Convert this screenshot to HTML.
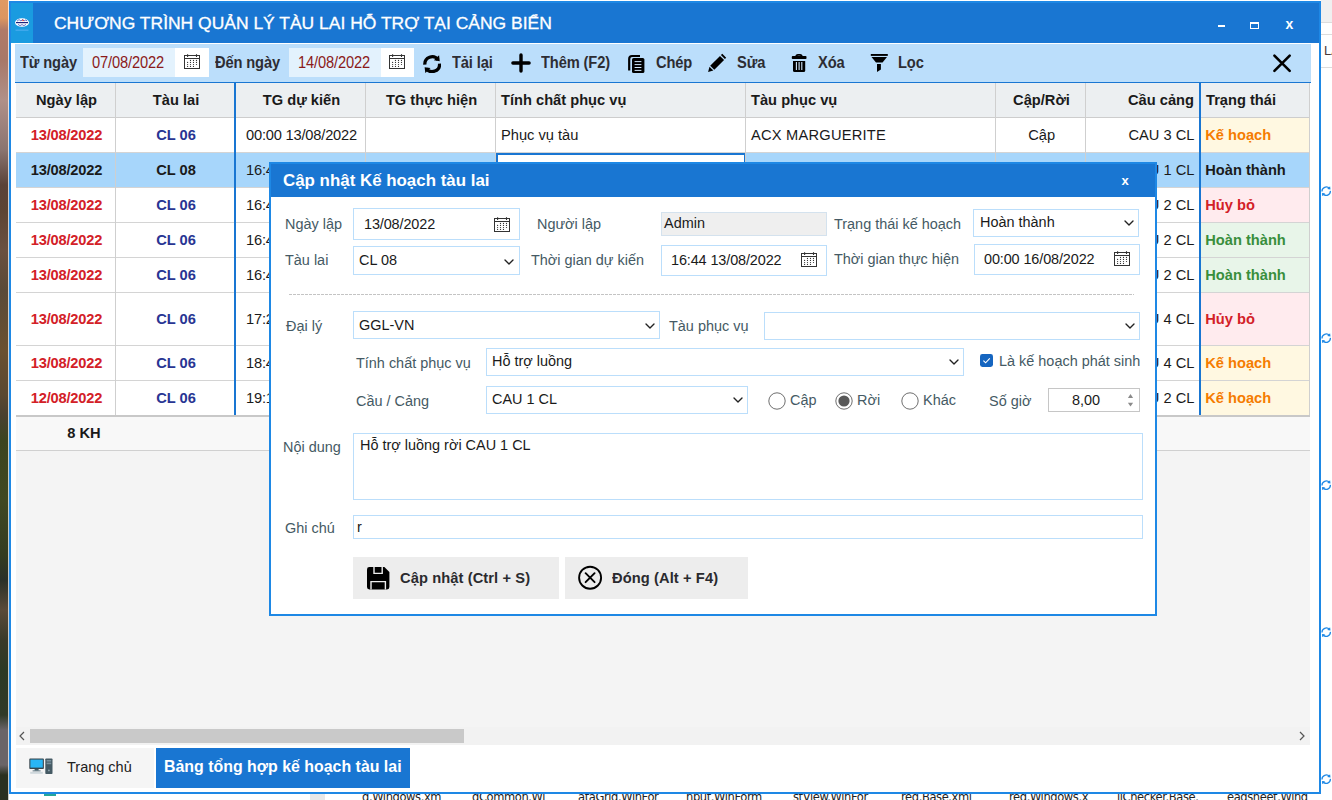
<!DOCTYPE html>
<html lang="vi">
<head>
<meta charset="utf-8">
<title>Chương trình quản lý tàu lai hỗ trợ tại cảng biển</title>
<style>
*{box-sizing:border-box;margin:0;padding:0}
html,body{width:1332px;height:800px;overflow:hidden;background:#fff}
body{position:relative;font-family:"Liberation Sans",Arial,sans-serif;font-size:14.67px;color:#212121}
.abs{position:absolute}
.t{position:absolute;white-space:nowrap;line-height:20px;height:20px}
.b{font-weight:bold}
#bgL{left:0;top:0;width:8px;height:800px;background:linear-gradient(180deg,#e09a62 0,#dc9660 18px,#b07a68 30px,#a87868 60px,#b09088 100px,#8a7470 150px,#5a4238 185px,#5c4434 210px,#6a5040 250px,#5a4a38 290px,#6a5030 350px,#5a4830 395px,#4a4030 415px,#3c4420 440px,#404822 500px,#343c20 555px,#2a3028 580px,#5a4a38 610px,#3a3a28 640px,#2c3a24 670px,#303a28 715px,#6a6468 730px,#6a6468 765px,#2a3020 775px,#2a3020 800px);border-right:1.5px solid rgba(255,255,255,.75);width:9px}
#win{left:9px;top:1px;width:1312px;height:793px;background:#fff;border:2px solid #1e88e5}
#tbar{left:11px;top:2.5px;width:1308px;height:40.5px;background:#1976d2}
#ticon{left:11px;top:2.5px;width:22px;height:40.5px;background:#1a9be0}
#title{-webkit-text-stroke:0.3px #fff;left:54px;top:12.6px;font-size:16.2px;color:#fff;line-height:20px;transform:scaleX(1.079);transform-origin:0 0}
#tool{left:15px;top:44px;width:1296px;height:38px;background:#bbdefb}
.tl{font-weight:bold;color:#2d2d33;top:53px;transform:scaleY(1.08);transform-origin:0 74%;letter-spacing:-0.12px}
.dinp{top:48px;height:29px;background:#e3f2fd}
.dbtn{top:48px;height:29px;background:#fff}
.dtxt{color:#8b1a1a;top:53px;transform:scaleY(1.08);transform-origin:0 74%}
#gridtop{left:15px;top:82px;width:1296px;height:1.4px;background:#1976d2}
#ghead{left:16px;top:83px;width:1294px;height:35px;background:#eceff1;border-bottom:1px solid #cdcdcd}
.row{left:16px;width:1294px;background:#fff;border-bottom:1px solid #d4d4d4}
.sel{background:#a7d6fb}
.vl{width:1px;background:#cfcfcf;top:83px;height:333px}
.bl{width:2px;background:#1976d2;top:83px;height:333px}
#gfoot{left:16px;top:415px;width:1294px;height:36px;background:#f8f8f8;border-top:2px solid #c8c8c8;border-bottom:1px solid #d0d0d0}
#gbody{left:16px;top:451px;width:1294px;height:276px;background:#f4f4f4}
#hscroll{left:16px;top:727px;width:1294px;height:18px;background:#f2f2f2}
#hthumb{left:30px;top:729px;width:434px;height:14px;background:#c9c9c9}
.red{color:#d32027}.blue{color:#283593}.org{color:#f57c00}.grn{color:#388e3c}
#tab1{left:16px;top:748px;width:138px;height:40px;background:#f5f5f5}
#tab2{left:156px;top:748px;width:254px;height:40px;background:#1976d2}
#dlg{left:269px;top:162px;width:888px;height:454px;background:#fff;border:2px solid #1e88e5}
#dlgt{left:271px;top:164px;width:884px;height:33px;background:#1976d2}
.lb{color:#455a64;font-size:14.45px}
.inp{background:#fff;border:1px solid #bbdefb}
.dk{color:#1a1a1a}
.dv{font-size:14.45px}
.btn{background:#ededed;top:557px;height:42px}
</style>
</head>
<body>
<div class="abs" id="bgL"></div>
<div class="abs" style="left:1321px;top:0;width:11px;height:23px;background:#f0f0f0;border-bottom:1px solid #dcdcdc"></div>
<div class="abs" style="left:1321px;top:34px;width:11px;height:1px;background:#dcdcdc"></div>
<div class="abs" style="left:1321px;top:67px;width:11px;height:1px;background:#dcdcdc"></div>
<div class="t " style="left:1324px;top:41px;font-size:13px;color:#4a3a3a">LA</div>
<svg class="abs" style="left:1320.5px;top:185.8px" width="10.4" height="10.4" viewBox="0 0 18 18"><path d="M1.8 9.5 A7.2 7.2 0 0 1 14.67 4.57" fill="none" stroke="#1e88e5" stroke-width="2.2"/><path d="M16.2 8.5 A7.2 7.2 0 0 1 3.33 13.43" fill="none" stroke="#1e88e5" stroke-width="2.2"/><polygon points="15.75,0.3 16.4,6.05 10.65,5.2" fill="#1e88e5"/><polygon points="2.25,17.7 1.6,11.95 7.35,12.8" fill="#1e88e5"/></svg>
<svg class="abs" style="left:1320.5px;top:332.5px" width="10.4" height="10.4" viewBox="0 0 18 18"><path d="M1.8 9.5 A7.2 7.2 0 0 1 14.67 4.57" fill="none" stroke="#1e88e5" stroke-width="2.2"/><path d="M16.2 8.5 A7.2 7.2 0 0 1 3.33 13.43" fill="none" stroke="#1e88e5" stroke-width="2.2"/><polygon points="15.75,0.3 16.4,6.05 10.65,5.2" fill="#1e88e5"/><polygon points="2.25,17.7 1.6,11.95 7.35,12.8" fill="#1e88e5"/></svg>
<svg class="abs" style="left:1320.5px;top:479.7px" width="10.4" height="10.4" viewBox="0 0 18 18"><path d="M1.8 9.5 A7.2 7.2 0 0 1 14.67 4.57" fill="none" stroke="#1e88e5" stroke-width="2.2"/><path d="M16.2 8.5 A7.2 7.2 0 0 1 3.33 13.43" fill="none" stroke="#1e88e5" stroke-width="2.2"/><polygon points="15.75,0.3 16.4,6.05 10.65,5.2" fill="#1e88e5"/><polygon points="2.25,17.7 1.6,11.95 7.35,12.8" fill="#1e88e5"/></svg>
<svg class="abs" style="left:1320.5px;top:626.6999999999999px" width="10.4" height="10.4" viewBox="0 0 18 18"><path d="M1.8 9.5 A7.2 7.2 0 0 1 14.67 4.57" fill="none" stroke="#1e88e5" stroke-width="2.2"/><path d="M16.2 8.5 A7.2 7.2 0 0 1 3.33 13.43" fill="none" stroke="#1e88e5" stroke-width="2.2"/><polygon points="15.75,0.3 16.4,6.05 10.65,5.2" fill="#1e88e5"/><polygon points="2.25,17.7 1.6,11.95 7.35,12.8" fill="#1e88e5"/></svg>
<svg class="abs" style="left:1320.5px;top:773.6999999999999px" width="10.4" height="10.4" viewBox="0 0 18 18"><path d="M1.8 9.5 A7.2 7.2 0 0 1 14.67 4.57" fill="none" stroke="#1e88e5" stroke-width="2.2"/><path d="M16.2 8.5 A7.2 7.2 0 0 1 3.33 13.43" fill="none" stroke="#1e88e5" stroke-width="2.2"/><polygon points="15.75,0.3 16.4,6.05 10.65,5.2" fill="#1e88e5"/><polygon points="2.25,17.7 1.6,11.95 7.35,12.8" fill="#1e88e5"/></svg>
<div class="t" style="left:362px;top:787px;font-size:11.5px;color:#222;font-family:'DejaVu Sans','Liberation Sans',sans-serif;letter-spacing:-0.4px">d.Windows.xm</div>
<div class="t" style="left:472px;top:787px;font-size:11.5px;color:#222;font-family:'DejaVu Sans','Liberation Sans',sans-serif;letter-spacing:-0.4px">dCommon.Wi</div>
<div class="t" style="left:578px;top:787px;font-size:11.5px;color:#222;font-family:'DejaVu Sans','Liberation Sans',sans-serif;letter-spacing:-0.4px">ataGrid.WinFor</div>
<div class="t" style="left:686px;top:787px;font-size:11.5px;color:#222;font-family:'DejaVu Sans','Liberation Sans',sans-serif;letter-spacing:-0.4px">nput.WinForm</div>
<div class="t" style="left:793px;top:787px;font-size:11.5px;color:#222;font-family:'DejaVu Sans','Liberation Sans',sans-serif;letter-spacing:-0.4px">stView.WinFor</div>
<div class="t" style="left:901px;top:787px;font-size:11.5px;color:#222;font-family:'DejaVu Sans','Liberation Sans',sans-serif;letter-spacing:-0.4px">red.Base.xml</div>
<div class="t" style="left:1009px;top:787px;font-size:11.5px;color:#222;font-family:'DejaVu Sans','Liberation Sans',sans-serif;letter-spacing:-0.4px">red.Windows.x</div>
<div class="t" style="left:1117px;top:787px;font-size:11.5px;color:#222;font-family:'DejaVu Sans','Liberation Sans',sans-serif;letter-spacing:-0.4px">llChecker.Base.</div>
<div class="t" style="left:1227px;top:787px;font-size:11.5px;color:#222;font-family:'DejaVu Sans','Liberation Sans',sans-serif;letter-spacing:-0.4px">eadsheet.Wind</div>
<div class="abs" style="left:310px;top:794px;width:15px;height:6px;background:#e8e8e8"></div>
<div class="abs" id="win"></div>
<div class="abs" style="left:44px;top:794px;width:12px;height:2px;background:#26a69a"></div>
<div class="abs" id="tbar"></div>
<div class="abs" id="ticon"></div>
<div class="t" id="title">CHƯƠNG TRÌNH QUẢN LÝ TÀU LAI HỖ TRỢ TẠI CẢNG BIỂN</div>
<svg class="abs" style="left:14px;top:15.9px" width="16" height="16" viewBox="0 0 16 16"><ellipse cx="8" cy="6.5" rx="7" ry="4.3" fill="#fff"/><rect x="2" y="6" width="12" height="1.2" fill="#1a237e"/><path d="M3 5.2 L5 3.6 L7 5 L8.5 3.4 L10 5 L12 3.8 L13 5.2" stroke="#3f51b5" stroke-width="0.8" fill="none"/><path d="M4 8.4 L6 9.6 L8 8.6 L10 9.6 L12 8.4" stroke="#3f51b5" stroke-width="0.8" fill="none"/><circle cx="9" cy="4.4" r="0.8" fill="#e53935"/><rect x="1.5" y="13.6" width="13" height="1.1" fill="#64b5f6" opacity="0.7"/></svg>
<div class="abs" style="left:1218px;top:25px;width:7px;height:2.4px;background:#fff"></div>
<div class="abs" style="left:1250px;top:22px;width:9px;height:7px;border:1px solid #fff;border-top-width:2px"></div>
<div class="t b" style="left:1285.5px;top:13.600000000000001px;color:#fff;font-size:14px">x</div>
<div class="abs" id="tool"></div>
<div class="t tl" style="left:20px;top:53px;">Từ ngày</div>
<div class="abs dinp" style="left:83px;width:92px"></div><div class="abs dbtn" style="left:175px;width:34px"></div>
<div class="t dtxt" style="left:92px;top:53px;letter-spacing:-0.14px">07/08/2022</div>
<div class="t tl" style="left:215px;top:53px;">Đến ngày</div>
<div class="abs dinp" style="left:289px;width:92px"></div><div class="abs dbtn" style="left:381px;width:33px"></div>
<div class="t dtxt" style="left:298px;top:53px;letter-spacing:-0.14px">14/08/2022</div>
<div class="t tl" style="left:452px;top:53px;">Tải lại</div>
<div class="t tl" style="left:541px;top:53px;">Thêm (F2)</div>
<div class="t tl" style="left:656px;top:53px;">Chép</div>
<div class="t tl" style="left:737px;top:53px;">Sửa</div>
<div class="t tl" style="left:818px;top:53px;">Xóa</div>
<div class="t tl" style="left:898px;top:53px;">Lọc</div>
<svg class="abs" style="left:184px;top:54px" width="16" height="16" viewBox="0 0 16 16"><rect x="0.5" y="1.5" width="15" height="13" fill="none" stroke="#333" stroke-width="1"/><line x1="0.5" y1="4.5" x2="15.5" y2="4.5" stroke="#333" stroke-width="1"/><line x1="3.6" y1="0.2" x2="3.6" y2="3" stroke="#333" stroke-width="1.1"/><line x1="12.5" y1="0.2" x2="12.5" y2="3" stroke="#333" stroke-width="1.1"/><circle cx="6.5" cy="6.4" r="0.6" fill="#333"/><circle cx="9.5" cy="6.4" r="0.6" fill="#333"/><circle cx="12.5" cy="6.4" r="0.6" fill="#333"/><circle cx="3.6" cy="8.4" r="0.6" fill="#333"/><circle cx="6.5" cy="8.4" r="0.6" fill="#333"/><circle cx="9.5" cy="8.4" r="0.6" fill="#333"/><circle cx="12.5" cy="8.4" r="0.6" fill="#333"/><circle cx="3.6" cy="10.5" r="0.6" fill="#333"/><circle cx="6.5" cy="10.5" r="0.6" fill="#333"/><circle cx="9.5" cy="10.5" r="0.6" fill="#333"/><circle cx="12.5" cy="10.5" r="0.6" fill="#333"/><circle cx="3.6" cy="12.4" r="0.6" fill="#333"/><circle cx="6.5" cy="12.4" r="0.6" fill="#333"/><circle cx="9.5" cy="12.4" r="0.6" fill="#333"/></svg>
<svg class="abs" style="left:389px;top:54px" width="16" height="16" viewBox="0 0 16 16"><rect x="0.5" y="1.5" width="15" height="13" fill="none" stroke="#333" stroke-width="1"/><line x1="0.5" y1="4.5" x2="15.5" y2="4.5" stroke="#333" stroke-width="1"/><line x1="3.6" y1="0.2" x2="3.6" y2="3" stroke="#333" stroke-width="1.1"/><line x1="12.5" y1="0.2" x2="12.5" y2="3" stroke="#333" stroke-width="1.1"/><circle cx="6.5" cy="6.4" r="0.6" fill="#333"/><circle cx="9.5" cy="6.4" r="0.6" fill="#333"/><circle cx="12.5" cy="6.4" r="0.6" fill="#333"/><circle cx="3.6" cy="8.4" r="0.6" fill="#333"/><circle cx="6.5" cy="8.4" r="0.6" fill="#333"/><circle cx="9.5" cy="8.4" r="0.6" fill="#333"/><circle cx="12.5" cy="8.4" r="0.6" fill="#333"/><circle cx="3.6" cy="10.5" r="0.6" fill="#333"/><circle cx="6.5" cy="10.5" r="0.6" fill="#333"/><circle cx="9.5" cy="10.5" r="0.6" fill="#333"/><circle cx="12.5" cy="10.5" r="0.6" fill="#333"/><circle cx="3.6" cy="12.4" r="0.6" fill="#333"/><circle cx="6.5" cy="12.4" r="0.6" fill="#333"/><circle cx="9.5" cy="12.4" r="0.6" fill="#333"/></svg>
<svg class="abs" style="left:422.8px;top:54.7px" width="18.4" height="18.4" viewBox="0 0 18 18"><path d="M1.8 9.5 A7.2 7.2 0 0 1 14.67 4.57" fill="none" stroke="#000" stroke-width="3.2"/><path d="M16.2 8.5 A7.2 7.2 0 0 1 3.33 13.43" fill="none" stroke="#000" stroke-width="3.2"/><polygon points="15.75,0.3 16.4,6.05 10.65,5.2" fill="#000"/><polygon points="2.25,17.7 1.6,11.95 7.35,12.8" fill="#000"/></svg>
<svg class="abs" style="left:511px;top:53.1px" width="20" height="20" viewBox="0 0 20 20"><path d="M10 1.9 V18.1 M1.9 10 H18.1" stroke="#000" stroke-width="3.4" stroke-linecap="round" fill="none"/></svg>
<svg class="abs" style="left:627px;top:53.5px" width="19" height="20" viewBox="0 0 19 20"><path d="M13 2 H5 Q2.2 2 2.2 5 V16.5" fill="none" stroke="#000" stroke-width="2.2"/><rect x="5" y="4" width="12.4" height="15" rx="1.6" fill="#000"/><g stroke="#cfe6fb" stroke-width="1"><line x1="7.6" y1="7.6" x2="14.4" y2="7.6"/><line x1="7.6" y1="10.6" x2="14.4" y2="10.6"/><line x1="7.6" y1="13.5" x2="14.4" y2="13.5"/><line x1="7.6" y1="16.4" x2="14.4" y2="16.4"/></g></svg>
<svg class="abs" style="left:707px;top:53px" width="20" height="20" viewBox="0 0 20 20"><polygon points="1.1,18.9 2.5,13.7 6.3,17.5" fill="#000"/><polygon points="3.2,12.7 13,2.9 17.1,7 7.3,16.8" fill="#000"/><polygon points="13.9,2.1 15.3,0.8 19.2,4.7 17.9,6.1" fill="#000"/></svg>
<svg class="abs" style="left:790px;top:53px" width="18" height="20" viewBox="0 0 18 20"><path d="M6.2 3.6 Q6.2 1.9 8 1.9 H10 Q11.8 1.9 11.8 3.6" fill="none" stroke="#000" stroke-width="1.7"/><rect x="1.8" y="3.1" width="14.7" height="2.9" rx="0.8" fill="#000"/><path d="M3 8.1 H15.2 V17.4 Q15.2 18.9 13.7 18.9 H4.5 Q3 18.9 3 17.4 Z" fill="#000"/><g stroke="#cfe6fb" stroke-width="1.1"><line x1="6.4" y1="9" x2="6.4" y2="17"/><line x1="9.1" y1="9" x2="9.1" y2="17"/><line x1="11.8" y1="9" x2="11.8" y2="17"/></g></svg>
<svg class="abs" style="left:869px;top:53px" width="20" height="20" viewBox="0 0 20 20"><rect x="1.8" y="1" width="17" height="1.9" fill="#000"/><polygon points="2.5,4 18,4 13.5,9.4 7,9.4" fill="#000"/><polygon points="8,11 11.9,11 11.9,16.4 8,18.9" fill="#000"/></svg>
<svg class="abs" style="left:1271px;top:52px" width="22" height="22" viewBox="0 0 22 22"><path d="M3.4 3.6 L18.7 18.9 M18.7 3.6 L3.4 18.9" stroke="#000" stroke-width="2.6" stroke-linecap="round"/></svg>
<div class="abs" id="gridtop"></div>
<div class="abs" id="ghead"></div>
<div class="abs" id="gbody"></div>
<div class="t b dk" style="left:17px;width:99px;text-align:center;top:90px">Ngày lập</div>
<div class="t b dk" style="left:117px;width:118px;text-align:center;top:90px">Tàu lai</div>
<div class="t b dk" style="left:237px;width:129px;text-align:center;top:90px">TG dự kiến</div>
<div class="t b dk" style="left:367px;width:129px;text-align:center;top:90px">TG thực hiện</div>
<div class="t b dk" style="left:501px;top:90px">Tính chất phục vụ</div>
<div class="t b dk" style="left:751px;top:90px">Tàu phục vụ</div>
<div class="t b dk" style="left:997px;width:89px;text-align:center;top:90px">Cập/Rời</div>
<div class="t b dk" style="left:1086px;width:108px;text-align:right;top:90px">Cầu cảng</div>
<div class="t b dk" style="left:1206px;top:90px">Trạng thái</div>
<div class="abs row" style="top:118px;height:35px"></div>
<div class="abs" style="left:1201px;top:118px;width:109px;height:34px;background:#fff8e1"></div>
<div class="t b red" style="left:17px;width:99px;text-align:center;letter-spacing:-0.2px;top:125.0px">13/08/2022</div>
<div class="t b blue" style="left:117px;width:118px;text-align:center;top:125.0px">CL 06</div>
<div class="t dk" style="left:237px;width:129px;text-align:center;letter-spacing:-0.2px;top:125.0px">00:00 13/08/2022</div>
<div class="t dk" style="left:501px;top:125.0px">Phục vụ tàu</div>
<div class="t dk" style="left:751px;letter-spacing:0.22px;top:125.0px">ACX MARGUERITE</div>
<div class="t dk" style="left:997.2px;width:89px;text-align:center;top:125.0px">Cập</div>
<div class="t dk" style="left:1086px;width:108.4px;text-align:right;top:125.0px">CAU 3 CL</div>
<div class="t b org" style="left:1205.2px;top:125.0px">Kế hoạch</div>
<div class="abs row sel" style="top:153px;height:35px"></div>
<div class="abs" style="left:1201px;top:153px;width:109px;height:34px;background:#a7d6fb"></div>
<div class="t b dk" style="left:17px;width:99px;text-align:center;letter-spacing:-0.2px;top:160.0px">13/08/2022</div>
<div class="t b dk" style="left:117px;width:118px;text-align:center;top:160.0px">CL 08</div>
<div class="t dk" style="left:237px;width:129px;text-align:center;letter-spacing:-0.2px;top:160.0px">16:44 13/08/2022</div>
<div class="t dk" style="left:367px;width:129px;text-align:center;letter-spacing:-0.2px;top:160.0px">00:00 16/08/2022</div>
<div class="t dk" style="left:501px;top:160.0px">Hỗ trợ luồng</div>
<div class="t dk" style="left:997.2px;width:89px;text-align:center;top:160.0px">Rời</div>
<div class="t dk" style="left:1086px;width:108.4px;text-align:right;top:160.0px">CAU 1 CL</div>
<div class="t b dk" style="left:1205.2px;top:160.0px">Hoàn thành</div>
<div class="abs row" style="top:188px;height:35px"></div>
<div class="abs" style="left:1201px;top:188px;width:109px;height:34px;background:#ffebee"></div>
<div class="t b red" style="left:17px;width:99px;text-align:center;letter-spacing:-0.2px;top:195.0px">13/08/2022</div>
<div class="t b blue" style="left:117px;width:118px;text-align:center;top:195.0px">CL 06</div>
<div class="t dk" style="left:237px;width:129px;text-align:center;letter-spacing:-0.2px;top:195.0px">16:45 13/08/2022</div>
<div class="t dk" style="left:501px;top:195.0px">Phục vụ tàu</div>
<div class="t dk" style="left:997.2px;width:89px;text-align:center;top:195.0px">Rời</div>
<div class="t dk" style="left:1086px;width:108.4px;text-align:right;top:195.0px">CAU 2 CL</div>
<div class="t b red" style="left:1205.2px;top:195.0px">Hủy bỏ</div>
<div class="abs row" style="top:223px;height:35px"></div>
<div class="abs" style="left:1201px;top:223px;width:109px;height:34px;background:#e8f5e9"></div>
<div class="t b red" style="left:17px;width:99px;text-align:center;letter-spacing:-0.2px;top:230.0px">13/08/2022</div>
<div class="t b blue" style="left:117px;width:118px;text-align:center;top:230.0px">CL 06</div>
<div class="t dk" style="left:237px;width:129px;text-align:center;letter-spacing:-0.2px;top:230.0px">16:46 13/08/2022</div>
<div class="t dk" style="left:501px;top:230.0px">Phục vụ tàu</div>
<div class="t dk" style="left:997.2px;width:89px;text-align:center;top:230.0px">Rời</div>
<div class="t dk" style="left:1086px;width:108.4px;text-align:right;top:230.0px">CAU 2 CL</div>
<div class="t b grn" style="left:1205.2px;top:230.0px">Hoàn thành</div>
<div class="abs row" style="top:258px;height:35px"></div>
<div class="abs" style="left:1201px;top:258px;width:109px;height:34px;background:#e8f5e9"></div>
<div class="t b red" style="left:17px;width:99px;text-align:center;letter-spacing:-0.2px;top:265.0px">13/08/2022</div>
<div class="t b blue" style="left:117px;width:118px;text-align:center;top:265.0px">CL 06</div>
<div class="t dk" style="left:237px;width:129px;text-align:center;letter-spacing:-0.2px;top:265.0px">16:47 13/08/2022</div>
<div class="t dk" style="left:501px;top:265.0px">Phục vụ tàu</div>
<div class="t dk" style="left:997.2px;width:89px;text-align:center;top:265.0px">Rời</div>
<div class="t dk" style="left:1086px;width:108.4px;text-align:right;top:265.0px">CAU 2 CL</div>
<div class="t b grn" style="left:1205.2px;top:265.0px">Hoàn thành</div>
<div class="abs row" style="top:293px;height:53px"></div>
<div class="abs" style="left:1201px;top:293px;width:109px;height:52px;background:#ffebee"></div>
<div class="t b red" style="left:17px;width:99px;text-align:center;letter-spacing:-0.2px;top:309.0px">13/08/2022</div>
<div class="t b blue" style="left:117px;width:118px;text-align:center;top:309.0px">CL 06</div>
<div class="t dk" style="left:237px;width:129px;text-align:center;letter-spacing:-0.2px;top:309.0px">17:20 13/08/2022</div>
<div class="t dk" style="left:501px;top:309.0px">Phục vụ tàu</div>
<div class="t dk" style="left:997.2px;width:89px;text-align:center;top:309.0px">Cập</div>
<div class="t dk" style="left:1086px;width:108.4px;text-align:right;top:309.0px">CAU 4 CL</div>
<div class="t b red" style="left:1205.2px;top:309.0px">Hủy bỏ</div>
<div class="abs row" style="top:346px;height:35px"></div>
<div class="abs" style="left:1201px;top:346px;width:109px;height:34px;background:#fff8e1"></div>
<div class="t b red" style="left:17px;width:99px;text-align:center;letter-spacing:-0.2px;top:353.0px">13/08/2022</div>
<div class="t b blue" style="left:117px;width:118px;text-align:center;top:353.0px">CL 06</div>
<div class="t dk" style="left:237px;width:129px;text-align:center;letter-spacing:-0.2px;top:353.0px">18:40 13/08/2022</div>
<div class="t dk" style="left:501px;top:353.0px">Phục vụ tàu</div>
<div class="t dk" style="left:997.2px;width:89px;text-align:center;top:353.0px">Rời</div>
<div class="t dk" style="left:1086px;width:108.4px;text-align:right;top:353.0px">CAU 4 CL</div>
<div class="t b org" style="left:1205.2px;top:353.0px">Kế hoạch</div>
<div class="abs row" style="top:381px;height:35px"></div>
<div class="abs" style="left:1201px;top:381px;width:109px;height:34px;background:#fff8e1"></div>
<div class="t b red" style="left:17px;width:99px;text-align:center;letter-spacing:-0.2px;top:388.0px">12/08/2022</div>
<div class="t b blue" style="left:117px;width:118px;text-align:center;top:388.0px">CL 06</div>
<div class="t dk" style="left:237px;width:129px;text-align:center;letter-spacing:-0.2px;top:388.0px">19:10 12/08/2022</div>
<div class="t dk" style="left:501px;top:388.0px">Phục vụ tàu</div>
<div class="t dk" style="left:997.2px;width:89px;text-align:center;top:388.0px">Cập</div>
<div class="t dk" style="left:1086px;width:108.4px;text-align:right;top:388.0px">CAU 2 CL</div>
<div class="t b org" style="left:1205.2px;top:388.0px">Kế hoạch</div>
<div class="abs" style="left:496px;top:153px;width:250px;height:35px;background:#fff;border:2px solid #1976d2"></div>
<div class="t dk" style="left:501px;top:160px;">Hỗ trợ luồng</div>
<div class="abs vl" style="left:115px"></div>
<div class="abs vl" style="left:365px"></div>
<div class="abs vl" style="left:495px"></div>
<div class="abs vl" style="left:745px"></div>
<div class="abs vl" style="left:995px"></div>
<div class="abs vl" style="left:1085px"></div>
<div class="abs vl" style="left:1309px;height:368px"></div>
<div class="abs bl" style="left:234px"></div><div class="abs bl" style="left:1199px"></div>
<div class="abs" id="gfoot"></div>
<div class="t b dk" style="left:16px;width:136px;text-align:center;top:423px">8 KH</div>
<div class="abs" id="hscroll"></div>
<div class="abs" id="hthumb"></div>
<svg class="abs" style="left:19px;top:731px" width="6" height="10" viewBox="0 0 6 10"><polyline points="5,1 1,5 5,9" fill="none" stroke="#555" stroke-width="1.2"/></svg>
<svg class="abs" style="left:1299px;top:731px" width="6" height="10" viewBox="0 0 6 10"><polyline points="1,1 5,5 1,9" fill="none" stroke="#555" stroke-width="1.2"/></svg>
<div class="abs" id="tab1"></div>
<div class="abs" id="tab2"></div>
<svg class="abs" style="left:29px;top:758px" width="24" height="17" viewBox="0 0 24 17"><rect x="0.3" y="0.6" width="14.6" height="10.4" rx="0.8" fill="#37474f"/><rect x="1.4" y="1.6" width="12.4" height="8" fill="#29b6f6"/><rect x="5.6" y="11" width="4" height="1.6" fill="#455a64"/><rect x="3.6" y="12.4" width="8" height="1" fill="#546e7a"/><rect x="1.2" y="13.8" width="12.6" height="2" fill="#cfd8dc"/><rect x="16.3" y="0.4" width="7.2" height="15.6" rx="0.8" fill="#455a64"/><rect x="17.6" y="2" width="4.6" height="1.6" fill="#78909c"/><rect x="17.6" y="4.6" width="4.6" height="1.6" fill="#78909c"/><circle cx="19.9" cy="12.4" r="0.9" fill="#90a4ae"/></svg>
<div class="t " style="left:67px;top:757px;font-size:14.5px;color:#212121">Trang chủ</div>
<div class="t b" style="left:164px;top:757px;font-size:15.92px;color:#fff">Bảng tổng hợp kế hoạch tàu lai</div>
<div class="abs" id="dlg"></div>
<div class="abs" id="dlgt"></div>
<div class="t b" style="left:283px;top:171px;font-size:16.9px;color:#fff">Cập nhật Kế hoạch tàu lai</div>
<div class="t b" style="left:1121.5px;top:171.3px;color:#fff;font-size:13px">x</div>
<div class="t lb" style="left:285px;top:214px;">Ngày lập</div>
<div class="abs inp" style="left:353px;top:208px;width:167px;height:32px"></div>
<div class="t dk dv" style="left:364px;top:214px;;letter-spacing:-0.12px">13/08/2022</div>
<div class="t lb" style="left:537px;top:214px;">Người lập</div>
<div class="abs inp" style="left:661px;top:212px;width:166px;height:24px;background:#efefef;border-color:#d4e2ee"></div>
<div class="t dk dv" style="left:664px;top:213px;">Admin</div>
<div class="t lb" style="left:834px;top:214px;">Trạng thái kế hoạch</div>
<div class="abs inp" style="left:973px;top:209px;width:166px;height:28px"></div>
<div class="t dk dv" style="left:980px;top:212px;">Hoàn thành</div>
<div class="t lb" style="left:285px;top:250px;">Tàu lai</div>
<div class="abs inp" style="left:353px;top:246px;width:167px;height:29px"></div>
<div class="t dk dv" style="left:359px;top:250px;">CL 08</div>
<div class="t lb" style="left:531px;top:250px;">Thời gian dự kiến</div>
<div class="abs inp" style="left:661px;top:245px;width:166px;height:31px"></div>
<div class="t dk dv" style="left:671px;top:250px;;letter-spacing:-0.12px">16:44 13/08/2022</div>
<div class="t lb" style="left:834px;top:249px;">Thời gian thực hiện</div>
<div class="abs inp" style="left:974px;top:244px;width:166px;height:31px"></div>
<div class="t dk dv" style="left:984px;top:249px;;letter-spacing:-0.12px">00:00 16/08/2022</div>
<div class="abs" style="left:289px;top:294px;width:845px;height:1px;background:repeating-linear-gradient(90deg,#c4c4c4 0,#c4c4c4 3px,transparent 3px,transparent 4px)"></div>
<div class="t lb" style="left:286px;top:316px;">Đại lý</div>
<div class="abs inp" style="left:353px;top:311px;width:307px;height:28px"></div>
<div class="t dk dv" style="left:359px;top:315px;">GGL-VN</div>
<div class="t lb" style="left:669px;top:316px;">Tàu phục vụ</div>
<div class="abs inp" style="left:764px;top:312px;width:376px;height:28px"></div>
<div class="t lb" style="left:356px;top:353px;">Tính chất phục vụ</div>
<div class="abs inp" style="left:486px;top:348px;width:478px;height:28px"></div>
<div class="t dk dv" style="left:492px;top:351px;">Hỗ trợ luồng</div>
<div class="t lb" style="left:999px;top:351px;">Là kế hoạch phát sinh</div>
<div class="t lb" style="left:356px;top:391px;">Cầu / Cảng</div>
<div class="abs inp" style="left:486px;top:386px;width:262px;height:28px"></div>
<div class="t dk dv" style="left:492px;top:389px;">CAU 1 CL</div>
<div class="t lb" style="left:790px;top:390px;">Cập</div>
<div class="t lb" style="left:857px;top:390px;">Rời</div>
<div class="t lb" style="left:923px;top:390px;">Khác</div>
<div class="t lb" style="left:989px;top:391px;">Số giờ</div>
<div class="abs inp" style="left:1048px;top:388px;width:92px;height:24px;border-color:#c6c6c6"></div>
<div class="t dk dv" style="left:1048px;top:390px;;width:52px;text-align:right">8,00</div>
<div class="t lb" style="left:283px;top:437px;">Nội dung</div>
<div class="abs inp" style="left:353px;top:433px;width:790px;height:67px"></div>
<div class="t dk dv" style="left:360px;top:435px;">Hỗ trợ luồng rời CAU 1 CL</div>
<div class="t lb" style="left:285px;top:518px;">Ghi chú</div>
<div class="abs inp" style="left:353px;top:515px;width:790px;height:24px"></div>
<div class="t dk dv" style="left:357px;top:517px;">r</div>
<div class="abs btn" style="left:353px;width:206px"></div><div class="abs btn" style="left:565px;width:183px"></div>
<div class="t b" style="left:400px;top:568px;color:#2a2a2e;letter-spacing:0.1px;transform:scaleY(1.06);transform-origin:0 74%">Cập nhật (Ctrl + S)</div>
<div class="t b" style="left:612px;top:568px;color:#2a2a2e;letter-spacing:0.1px;transform:scaleY(1.06);transform-origin:0 74%">Đóng (Alt + F4)</div>
<svg class="abs" style="left:494px;top:216.6px" width="16" height="16" viewBox="0 0 16 16"><rect x="0.5" y="1.5" width="15" height="13" fill="none" stroke="#333" stroke-width="1"/><line x1="0.5" y1="4.5" x2="15.5" y2="4.5" stroke="#333" stroke-width="1"/><line x1="3.6" y1="0.2" x2="3.6" y2="3" stroke="#333" stroke-width="1.1"/><line x1="12.5" y1="0.2" x2="12.5" y2="3" stroke="#333" stroke-width="1.1"/><circle cx="6.5" cy="6.4" r="0.6" fill="#333"/><circle cx="9.5" cy="6.4" r="0.6" fill="#333"/><circle cx="12.5" cy="6.4" r="0.6" fill="#333"/><circle cx="3.6" cy="8.4" r="0.6" fill="#333"/><circle cx="6.5" cy="8.4" r="0.6" fill="#333"/><circle cx="9.5" cy="8.4" r="0.6" fill="#333"/><circle cx="12.5" cy="8.4" r="0.6" fill="#333"/><circle cx="3.6" cy="10.5" r="0.6" fill="#333"/><circle cx="6.5" cy="10.5" r="0.6" fill="#333"/><circle cx="9.5" cy="10.5" r="0.6" fill="#333"/><circle cx="12.5" cy="10.5" r="0.6" fill="#333"/><circle cx="3.6" cy="12.4" r="0.6" fill="#333"/><circle cx="6.5" cy="12.4" r="0.6" fill="#333"/><circle cx="9.5" cy="12.4" r="0.6" fill="#333"/></svg>
<svg class="abs" style="left:801px;top:252.4px" width="16" height="16" viewBox="0 0 16 16"><rect x="0.5" y="1.5" width="15" height="13" fill="none" stroke="#333" stroke-width="1"/><line x1="0.5" y1="4.5" x2="15.5" y2="4.5" stroke="#333" stroke-width="1"/><line x1="3.6" y1="0.2" x2="3.6" y2="3" stroke="#333" stroke-width="1.1"/><line x1="12.5" y1="0.2" x2="12.5" y2="3" stroke="#333" stroke-width="1.1"/><circle cx="6.5" cy="6.4" r="0.6" fill="#333"/><circle cx="9.5" cy="6.4" r="0.6" fill="#333"/><circle cx="12.5" cy="6.4" r="0.6" fill="#333"/><circle cx="3.6" cy="8.4" r="0.6" fill="#333"/><circle cx="6.5" cy="8.4" r="0.6" fill="#333"/><circle cx="9.5" cy="8.4" r="0.6" fill="#333"/><circle cx="12.5" cy="8.4" r="0.6" fill="#333"/><circle cx="3.6" cy="10.5" r="0.6" fill="#333"/><circle cx="6.5" cy="10.5" r="0.6" fill="#333"/><circle cx="9.5" cy="10.5" r="0.6" fill="#333"/><circle cx="12.5" cy="10.5" r="0.6" fill="#333"/><circle cx="3.6" cy="12.4" r="0.6" fill="#333"/><circle cx="6.5" cy="12.4" r="0.6" fill="#333"/><circle cx="9.5" cy="12.4" r="0.6" fill="#333"/></svg>
<svg class="abs" style="left:1114px;top:251.4px" width="16" height="16" viewBox="0 0 16 16"><rect x="0.5" y="1.5" width="15" height="13" fill="none" stroke="#333" stroke-width="1"/><line x1="0.5" y1="4.5" x2="15.5" y2="4.5" stroke="#333" stroke-width="1"/><line x1="3.6" y1="0.2" x2="3.6" y2="3" stroke="#333" stroke-width="1.1"/><line x1="12.5" y1="0.2" x2="12.5" y2="3" stroke="#333" stroke-width="1.1"/><circle cx="6.5" cy="6.4" r="0.6" fill="#333"/><circle cx="9.5" cy="6.4" r="0.6" fill="#333"/><circle cx="12.5" cy="6.4" r="0.6" fill="#333"/><circle cx="3.6" cy="8.4" r="0.6" fill="#333"/><circle cx="6.5" cy="8.4" r="0.6" fill="#333"/><circle cx="9.5" cy="8.4" r="0.6" fill="#333"/><circle cx="12.5" cy="8.4" r="0.6" fill="#333"/><circle cx="3.6" cy="10.5" r="0.6" fill="#333"/><circle cx="6.5" cy="10.5" r="0.6" fill="#333"/><circle cx="9.5" cy="10.5" r="0.6" fill="#333"/><circle cx="12.5" cy="10.5" r="0.6" fill="#333"/><circle cx="3.6" cy="12.4" r="0.6" fill="#333"/><circle cx="6.5" cy="12.4" r="0.6" fill="#333"/><circle cx="9.5" cy="12.4" r="0.6" fill="#333"/></svg>
<svg class="abs" style="left:1123.5px;top:220px" width="10" height="6" viewBox="0 0 10 6"><polyline points="1,1 5,5 9,1" fill="none" stroke="#222" stroke-width="1.35" stroke-linecap="round" stroke-linejoin="round"/></svg>
<svg class="abs" style="left:504.3px;top:258.5px" width="10" height="6" viewBox="0 0 10 6"><polyline points="1,1 5,5 9,1" fill="none" stroke="#222" stroke-width="1.35" stroke-linecap="round" stroke-linejoin="round"/></svg>
<svg class="abs" style="left:645px;top:323px" width="10" height="6" viewBox="0 0 10 6"><polyline points="1,1 5,5 9,1" fill="none" stroke="#222" stroke-width="1.35" stroke-linecap="round" stroke-linejoin="round"/></svg>
<svg class="abs" style="left:1124.5px;top:323px" width="10" height="6" viewBox="0 0 10 6"><polyline points="1,1 5,5 9,1" fill="none" stroke="#222" stroke-width="1.35" stroke-linecap="round" stroke-linejoin="round"/></svg>
<svg class="abs" style="left:948.5px;top:359px" width="10" height="6" viewBox="0 0 10 6"><polyline points="1,1 5,5 9,1" fill="none" stroke="#222" stroke-width="1.35" stroke-linecap="round" stroke-linejoin="round"/></svg>
<svg class="abs" style="left:732.7px;top:397px" width="10" height="6" viewBox="0 0 10 6"><polyline points="1,1 5,5 9,1" fill="none" stroke="#222" stroke-width="1.35" stroke-linecap="round" stroke-linejoin="round"/></svg>
<svg class="abs" style="left:980px;top:354px" width="13" height="13" viewBox="0 0 13 13"><rect x="0" y="0" width="13" height="13" rx="2.4" fill="#1565c0"/><polyline points="3.4,6.6 5.6,8.8 9.8,4.4" fill="none" stroke="#fff" stroke-width="1.15"/></svg>
<svg class="abs" style="left:768px;top:392px" width="18" height="18" viewBox="0 0 18 18"><circle cx="9" cy="9" r="8.2" fill="#fff" stroke="#6e6e6e" stroke-width="1"/></svg>
<svg class="abs" style="left:835px;top:392px" width="18" height="18" viewBox="0 0 18 18"><circle cx="9" cy="9" r="8.2" fill="#fff" stroke="#6e6e6e" stroke-width="1"/><circle cx="9" cy="9" r="5.6" fill="#585858"/></svg>
<svg class="abs" style="left:901px;top:392px" width="18" height="18" viewBox="0 0 18 18"><circle cx="9" cy="9" r="8.2" fill="#fff" stroke="#6e6e6e" stroke-width="1"/></svg>
<svg class="abs" style="left:1126px;top:391px" width="9" height="18" viewBox="0 0 9 18"><polygon points="4.5,3.1 7.1,6.9 1.9,6.9" fill="#8a8a8a"/><polygon points="1.9,11.8 7.1,11.8 4.5,15.5" fill="#8a8a8a"/></svg>
<svg class="abs" style="left:367px;top:567px" width="23" height="23" viewBox="0 0 23 23"><path d="M2.4 0 H17.4 L22.4 5 V20 Q22.4 22.4 20 22.4 H2.4 Q0 22.4 0 20 V2.4 Q0 0 2.4 0 Z" fill="#000"/><path d="M7 0 V6.4 H15.2 V0" fill="none" stroke="#ededed" stroke-width="1.4"/><path d="M4 22.4 V14.6 H18.4 V22.4" fill="none" stroke="#ededed" stroke-width="1.4"/></svg>
<svg class="abs" style="left:577px;top:565px" width="26" height="26" viewBox="0 0 26 26"><circle cx="13.1" cy="12.7" r="11" fill="none" stroke="#000" stroke-width="1.9"/><path d="M8.6 8.2 L17.6 17.2 M17.6 8.2 L8.6 17.2" stroke="#000" stroke-width="1.9" stroke-linecap="round"/></svg>
</body>
</html>
